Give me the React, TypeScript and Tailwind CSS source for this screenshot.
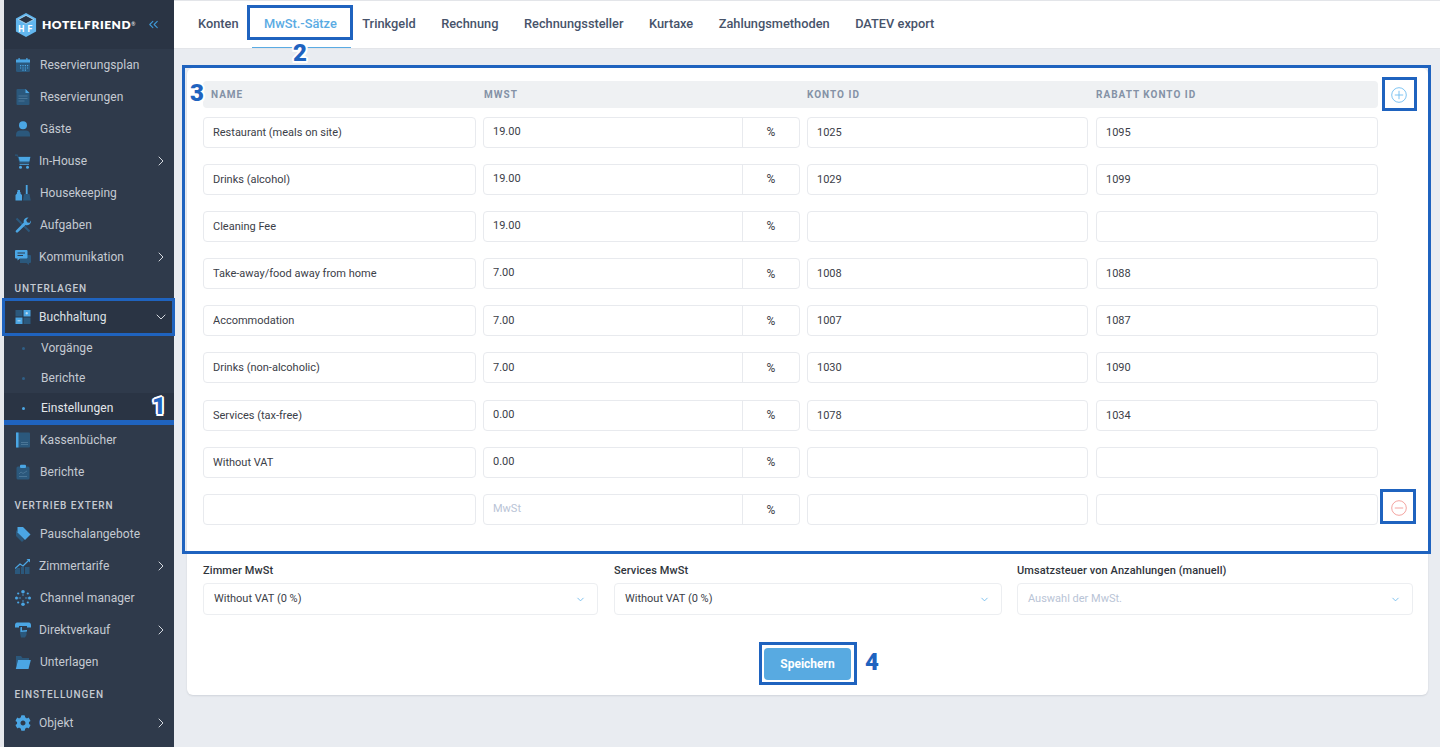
import { ReactNode } from "react";
import { ChevronDown, ChevronRight, ChevronsLeft } from "lucide-react";
import { FaCog } from "react-icons/fa";

const LIGHT = "#4ba6e4";
const DARK = "#2b587c";

const icons: Record<string, ReactNode> = {
  calendar: (
    <>
      <rect x="1" y="2.5" width="14" height="12.5" rx="1.5" fill={DARK} />
      <rect x="1" y="2.5" width="14" height="3" fill={LIGHT} />
      <rect x="3.5" y="1" width="1.2" height="2.5" fill={LIGHT} />
      <rect x="11.3" y="1" width="1.2" height="2.5" fill={LIGHT} />
      <path d="M5 8h1.2v1.2H5zM7.4 8h1.2v1.2H7.4zM9.8 8H11v1.2H9.8zM12 8h1.2v1.2H12zM5 10.4h1.2v1.2H5zM7.4 10.4h1.2v1.2H7.4zM9.8 10.4H11v1.2H9.8zM12 10.4h1.2v1.2H12zM7.4 12.6h1.2v1.2H7.4zM9.8 12.6H11v1.2H9.8z" fill={LIGHT} />
    </>
  ),
  doc: (
    <>
      <path d="M1.500 1a1 1 0 0 1 1-1h8l4 4v11a1 1 0 0 1-1 1h-11a1 1 0 0 1-1-1z" fill={DARK} />
      <path d="M10.500 0l4 4h-4z" fill={LIGHT} />
      <path d="M3.500 6.500h9v1h-9zM3.500 9h9v1h-9zM3.500 11.500h6v1h-6z" fill="#4a7596" />
    </>
  ),
  person: (
    <>
      <circle cx="8" cy="4.300" r="4" fill={LIGHT} />
      <path d="M1 15.500v-2c0-2.500 2-4 4-4h6c2 0 4 1.500 4 4v2z" fill={DARK} />
    </>
  ),
  cart: (
    <>
      <path d="M0 1.500h2.600l.6 2h12.300l-1.300 6.500H4.500L2.200 2.700H0z" fill={DARK} />
      <path d="M3.500 4h11.800l-.9 4.500H4.800z" fill={LIGHT} />
      <path d="M4.500 10.800h9.500v1H4.500z" fill={LIGHT} />
      <circle cx="5.500" cy="14.200" r="1.500" fill={LIGHT} />
      <circle cx="12.500" cy="14.200" r="1.500" fill={LIGHT} />
    </>
  ),
  broom: (
    <>
      <path d="M0.500 10l1.500-1.500V7h3.500v1.500L7 10v5.500H.5z" fill={LIGHT} />
      <rect x="2.500" y="5" width="2.500" height="2" fill={LIGHT} />
      <rect x="10.800" y="0" width="1.800" height="9" fill={LIGHT} />
      <path d="M9 9h5.500l1.200 6.500H8z" fill={DARK} />
    </>
  ),
  wrench: (
    <>
      <path d="M1.500 1.500 14.500 14.500" stroke={DARK} strokeWidth="2" />
      <path d="M1 13.400 8.800 5.600C8 3 10 .3 13.500.5l-2.300 2.600.9 2.200 2.300.6 1.500-2.300c.4 3.200-2.700 5.300-5.400 4.400L2.900 15.300a1.350 1.350 0 0 1-1.900-1.900z" fill={LIGHT} />
    </>
  ),
  chat: (
    <>
      <path d="M5 6h10a1 1 0 0 1 1 1v6a1 1 0 0 1-1 1h-1v2l-2.500-2H5z" fill={DARK} />
      <path d="M1 1h10.500a1 1 0 0 1 1 1v6.500a1 1 0 0 1-1 1H5l-2.500 2v-2H1a1 1 0 0 1-1-1V2a1 1 0 0 1 1-1z" fill={LIGHT} />
      <path d="M2.500 3.500h7.500v1H2.500zM2.500 6h5.500v1H2.500z" fill="#2f3a4b" />
    </>
  ),
  grid: (
    <>
      <rect x="0.500" y="1" width="7" height="6.500" fill={DARK} />
      <rect x="8.500" y="1" width="7" height="6.500" fill={LIGHT} />
      <rect x="0.500" y="8.500" width="7" height="6.500" fill={LIGHT} />
      <rect x="8.500" y="8.500" width="7" height="6.500" fill={DARK} />
      <path d="M10.500 4.200h2.500M11.800 3v2.500M2.500 11.800h3" stroke="#dceaf5" strokeWidth="0.800" />
    </>
  ),
  book: (
    <>
      <rect x="1" y="0.500" width="14" height="15" rx="1" fill={DARK} />
      <rect x="1" y="0.500" width="2.500" height="15" fill={LIGHT} />
      <path d="M6 10h7v1H6zM6 12h7v1H6z" fill="#4a7596" />
    </>
  ),
  clip: (
    <>
      <rect x="1.500" y="2.500" width="13" height="13" rx="1.500" fill={DARK} />
      <rect x="5" y="0.800" width="6" height="3.200" rx="1" fill={LIGHT} />
      <path d="M4 10l2-2 2 1.500L12 7" fill="none" stroke="#4a7596" strokeWidth="0.900" />
      <path d="M4 12h8v1H4z" fill="#4a7596" />
    </>
  ),
  tag: (
    <>
      <path d="M1 4v6l6 6 2-2z" fill={DARK} />
      <path d="M2.500 1H8l7.500 7.500-5.500 5.500L2.500 6.500z" fill={LIGHT} />
    </>
  ),
  chart: (
    <>
      <path d="M2 10h3v6H0v-4zM6 9h3v7H6zM10 9h4.500v7H10z" fill={DARK} />
      <path d="M0 10.500 5 6l3 2 6-6" fill="none" stroke={LIGHT} strokeWidth="1.300" />
      <path d="M11.500 1H15v3.500z" fill={LIGHT} />
    </>
  ),
  channel: (
    <>
      <circle cx="8" cy="1.800" r="1.800" fill={LIGHT} />
      <circle cx="8" cy="14.200" r="1.800" fill={LIGHT} />
      <circle cx="1.500" cy="8" r="1.500" fill={LIGHT} />
      <circle cx="14.500" cy="8" r="1.500" fill={LIGHT} />
      <circle cx="3.200" cy="3.500" r="1.100" fill={LIGHT} />
      <circle cx="12.800" cy="3.500" r="1.100" fill={LIGHT} />
      <circle cx="3.200" cy="12.500" r="1.100" fill={LIGHT} />
      <circle cx="12.800" cy="12.500" r="1.100" fill={LIGHT} />
      <path d="M3.500 8h2.500M10 8h2.500M8 4v2M8 10v2" stroke={LIGHT} strokeWidth="0.800" />
    </>
  ),
  phone: (
    <>
      <path d="M0 3C0 1 1.500.5 3 .5h10c1.500 0 3 .5 3 2.500v2.500h-4V4H4v1.500H0z" fill={LIGHT} />
      <path d="M5 6h1.500v3l5-.5v4.500l-1.500 2.500H6L5 11z" fill={DARK} />
      <path d="M5.500 5h1.500v3.500l5-.5v1.500l-6.500.5z" fill={LIGHT} />
    </>
  ),
  folder: (
    <>
      <path d="M1 2h5l1.500 2h6.500v2.500H3l-2 6z" fill={DARK} />
      <path d="M3 6h12.800L13.500 15H.8z" fill={LIGHT} />
    </>
  ),
};

function MenuIcon({ name }: { name: string }) {
  if (name === "gear") return <FaCog className="w-4 h-4 text-[#4ba6e4] shrink-0" />;
  return (
    <svg viewBox="0 0 16 16" className="w-4 h-4 shrink-0">
      {icons[name]}
    </svg>
  );
}

function MenuItem({ icon, label, more, open, className = "" }: { icon: string; label: string; more?: boolean; open?: boolean; className?: string }) {
  return (
    <div className={`h-8 flex items-center pl-[10.500px] pr-[5px] text-[#c5cad2] ${className}`}>
      <MenuIcon name={icon} />
      <span className={more ? "ml-[8.500px]" : "ml-[9.500px]"}>{label}</span>
      {more && !open && <ChevronRight className="ml-auto w-4 h-4 text-[#d5d9df]" strokeWidth={1.5} />}
      {open && <ChevronDown className="ml-auto w-4 h-4 text-[#d5d9df]" strokeWidth={1.5} />}
    </div>
  );
}

function SubItem({ label, active }: { label: string; active?: boolean }) {
  return (
    <div className={`h-[30px] flex items-center pl-[18px] ${active ? "bg-[#2a3444] text-[#e4e7eb]" : "text-[#c5cad2]"}`}>
      <span className={`w-[3px] h-[3px] rounded-full ${active ? "bg-[#4ba6e4]" : "bg-[#2f5f87]"}`} />
      <span className="ml-[16px]">{label}</span>
    </div>
  );
}

function SectionTitle({ children, className = "" }: { children: ReactNode; className?: string }) {
  return <div className={`pl-[10.500px] text-[10px] font-medium tracking-[0.95px] text-[#c5cad2] leading-none ${className}`}>{children}</div>;
}

function Sidebar() {
  return (
    <aside className="w-[174px] h-[747px] shrink-0 border-l-[4px] border-[#e6e8ec] bg-[#2f3a4b] text-[12px] tracking-[0.05px] overflow-hidden">
      <div className="h-[49px] bg-[#2a3444] flex items-center pl-[11px]">
        <svg viewBox="0 0 24 28" className="w-[22px] h-[26px] shrink-0">
          <path d="M12 1 23 7v14L12 27 1 21V7z" fill="#62b6ee" />
          <path d="M12 3.500 20.500 8 12 12.500 3.500 8z" fill="#2a3444" stroke="#a9d9f7" strokeWidth="1" />
          <text x="3.500" y="22" fontSize="9.500" fontWeight="700" fill="#fff" fontFamily="Roboto, sans-serif">H</text>
          <text x="13.500" y="22" fontSize="9.500" fontWeight="700" fill="#fff" fontFamily="Roboto, sans-serif">F</text>
        </svg>
        <span className="ml-[5px] text-[12px] font-extrabold tracking-[0.55px] text-white" style={{ fontFamily: "Lato, sans-serif" }}>
          HOTELFRIEND<sup className="text-[5px] font-normal">®</sup>
        </span>
        <ChevronsLeft className="ml-[10px] w-[15px] h-[15px] text-[#3f9ad8]" strokeWidth={1.7} />
      </div>
      <MenuItem icon="calendar" label="Reservierungsplan" />
      <MenuItem icon="doc" label="Reservierungen" />
      <MenuItem icon="person" label="Gäste" />
      <MenuItem icon="cart" label="In-House" more />
      <MenuItem icon="broom" label="Housekeeping" />
      <MenuItem icon="wrench" label="Aufgaben" />
      <MenuItem icon="chat" label="Kommunikation" more />
      <SectionTitle className="pt-[11px] pb-[7px]">UNTERLAGEN</SectionTitle>
      <MenuItem icon="grid" label="Buchhaltung" className="bg-[#2a3444] !text-[#dfe2e7]" more open />
      <SubItem label="Vorgänge" />
      <SubItem label="Berichte" />
      <SubItem label="Einstellungen" active />
      <div className="h-[1px]" />
      <MenuItem icon="book" label="Kassenbücher" />
      <MenuItem icon="clip" label="Berichte" />
      <SectionTitle className="pt-[13px] pb-[7px]">VERTRIEB EXTERN</SectionTitle>
      <MenuItem icon="tag" label="Pauschalangebote" />
      <MenuItem icon="chart" label="Zimmertarife" more />
      <MenuItem icon="channel" label="Channel manager" />
      <MenuItem icon="phone" label="Direktverkauf" more />
      <MenuItem icon="folder" label="Unterlagen" />
      <SectionTitle className="pt-[12px] pb-[7px]">EINSTELLUNGEN</SectionTitle>
      <MenuItem icon="gear" label="Objekt" more />
    </aside>
  );
}

const tabs = ["Konten", "MwSt.-Sätze", "Trinkgeld", "Rechnung", "Rechnungssteller", "Kurtaxe", "Zahlungsmethoden", "DATEV export"];

function Tabs() {
  return (
    <div className="h-[49px] bg-white border-t border-b border-[#e3e5e9] flex pl-[24px] gap-[25.500px] text-[12.800px] font-medium text-[#47536a] shrink-0">
      {tabs.map((t) =>
        t === "MwSt.-Sätze" ? (
          <div key={t} className="relative flex items-center h-full pb-[2px] text-[#5aabe3]">
            {t}
            <span className="absolute -left-[12px] -right-[14px] bottom-0 h-[1px] bg-[#5aabe3]" />
          </div>
        ) : (
          <div key={t} className="flex items-center h-full pb-[2px]">{t}</div>
        ),
      )}
    </div>
  );
}

const rows = [
  ["Restaurant (meals on site)", "19.00", "1025", "1095"],
  ["Drinks (alcohol)", "19.00", "1029", "1099"],
  ["Cleaning Fee", "19.00", "", ""],
  ["Take-away/food away from home", "7.00", "1008", "1088"],
  ["Accommodation", "7.00", "1007", "1087"],
  ["Drinks (non-alcoholic)", "7.00", "1030", "1090"],
  ["Services (tax-free)", "0.00", "1078", "1034"],
  ["Without VAT", "0.00", "", ""],
  ["", "", "", ""],
];

const inputClass = "h-[31px] rounded-[4px] border border-[#e8eaee] bg-white px-[9px] text-[11px] text-[#3b4048] outline-none placeholder:text-[#b9c4d6]";

function TaxRow({ row, last }: { row: string[]; last: boolean }) {
  return (
    <div className="flex items-center">
      <input readOnly defaultValue={row[0]} className={`${inputClass} w-[273px]`} />
      <div className="ml-[7px] w-[317px] h-[31px] flex rounded-[4px] border border-[#e8eaee] text-[11px]">
        <input readOnly defaultValue={row[1]} placeholder="MwSt" className="w-[259px] px-[9px] text-[#3b4048] outline-none rounded-l-[4px] placeholder:text-[#b9c4d6] border-r border-[#e8eaee]" />
        <div className="flex-1 flex items-center justify-center text-[12px] text-[#3b4048]">%</div>
      </div>
      <input readOnly defaultValue={row[2]} className={`${inputClass} ml-[7px] w-[281px]`} />
      <input readOnly defaultValue={row[3]} className={`${inputClass} ml-[8px] w-[282px]`} />
      {last && (
        <div className="w-[42px] flex justify-center -translate-y-[2px]">
          <svg viewBox="0 0 16 16" className="w-4 h-4" fill="none" stroke="#f29a95" strokeWidth="0.900">
            <circle cx="8" cy="8" r="7.300" />
            <path d="M3.800 8h8.400" />
          </svg>
        </div>
      )}
    </div>
  );
}

function SelectBox({ label, value, placeholder, width }: { label: string; value: string; placeholder?: boolean; width: string }) {
  return (
    <div className={width}>
      <div className="text-[11px] tracking-[0.1px] font-medium text-[#2f343b] leading-[14px]">{label}</div>
      <div className="mt-[5px] h-[32px] rounded-[4px] border border-[#eceef1] flex items-center pl-[10px] pr-[11px]">
        <span className={`text-[11px] ${placeholder ? "text-[#b9c4d6]" : "text-[#3b4048]"}`}>{value}</span>
        <ChevronDown className="ml-auto w-[11px] h-[11px] text-[#74bcec]" strokeWidth={2} />
      </div>
    </div>
  );
}

function Card() {
  return (
    <div className="h-[627px] rounded-[6px] bg-white shadow-[0_1px_2px_rgba(30,40,60,0.12)] pt-[13px] pl-[16px]">
      <div className="flex items-center">
        <div className="w-[1175px] h-[27px] rounded-[4px] bg-[#eff1f3] flex items-center text-[10px] font-bold tracking-[1px] text-[#8492a6]">
          <span className="ml-[8px] w-[273px]">NAME</span>
          <span className="w-[323px]">MWST</span>
          <span className="w-[289px]">KONTO ID</span>
          <span>RABATT KONTO ID</span>
        </div>
        <div className="w-[42px] flex justify-center">
          <svg viewBox="0 0 16 16" className="w-4 h-4" fill="none" stroke="#71bdf0" strokeWidth="0.900">
            <circle cx="8" cy="8" r="7.300" />
            <path d="M3.800 8h8.400M8 3.800v8.400" />
          </svg>
        </div>
      </div>
      <div className="mt-[8.500px] flex flex-col gap-[16.200px]">
        {rows.map((row, i) => (
          <TaxRow key={i} row={row} last={i === rows.length - 1} />
        ))}
      </div>
      <div className="mt-[39px] flex">
        <SelectBox label="Zimmer MwSt" value="Without VAT (0 %)" width="w-[395px]" />
        <SelectBox label="Services MwSt" value="Without VAT (0 %)" width="w-[388px] ml-[16px]" />
        <SelectBox label="Umsatzsteuer von Anzahlungen (manuell)" value="Auswahl der MwSt." placeholder width="w-[396px] ml-[15px]" />
      </div>
      <div className="mt-[33px] flex justify-center pr-[16px]">
        <button className="w-[87px] h-[32px] rounded-[4px] bg-[#58aae1] text-white text-[12px] font-bold">Speichern</button>
      </div>
    </div>
  );
}

const mark = "absolute border-[3px] border-[#1f63bf]";
const numClass =
  "absolute text-[24px] leading-none font-black text-[#1f63bf] [text-shadow:2px_0_0_#fff,-2px_0_0_#fff,0_2px_0_#fff,0_-2px_0_#fff,1.5px_1.5px_0_#fff,-1.5px_1.5px_0_#fff,1.5px_-1.5px_0_#fff,-1.5px_-1.5px_0_#fff]";

export default function App() {
  return (
    <div className="relative w-[1440px] h-[747px] flex overflow-hidden bg-[#e9ecf1]" style={{ fontFamily: "Roboto, sans-serif" }}>
      <Sidebar />
      <main className="flex-1 flex flex-col">
        <Tabs />
        <div className="pt-[19px] pl-[13px] pr-[12px]">
          <Card />
        </div>
      </main>

      {/* annotations drawn on top of the screenshot */}
      <div className={`${mark} left-[2px] top-[298px] w-[173px] h-[38px]`} />
      <div className="absolute left-[4px] top-[420px] w-[170px] h-[5px] bg-[#1f63bf]" />
      <div className={`${mark} left-[247px] top-[5px] w-[106px] h-[35px]`} />
      <div className={`${mark} left-[182px] top-[65px] w-[1249px] h-[489px]`} />
      <div className={`${mark} left-[1382px] top-[77px] w-[35px] h-[34px]`} />
      <div className={`${mark} left-[1380px] top-[489px] w-[36px] h-[35px]`} />
      <div className={`${mark} left-[759px] top-[642px] w-[98px] h-[43px]`} />
      <span className={`${numClass} left-[152px] top-[394px]`}>1</span>
      <span className={`${numClass} left-[293px] top-[41px]`}>2</span>
      <span className={`${numClass} left-[190px] top-[81px]`}>3</span>
      <span className={`${numClass} left-[865px] top-[650px]`}>4</span>
    </div>
  );
}
